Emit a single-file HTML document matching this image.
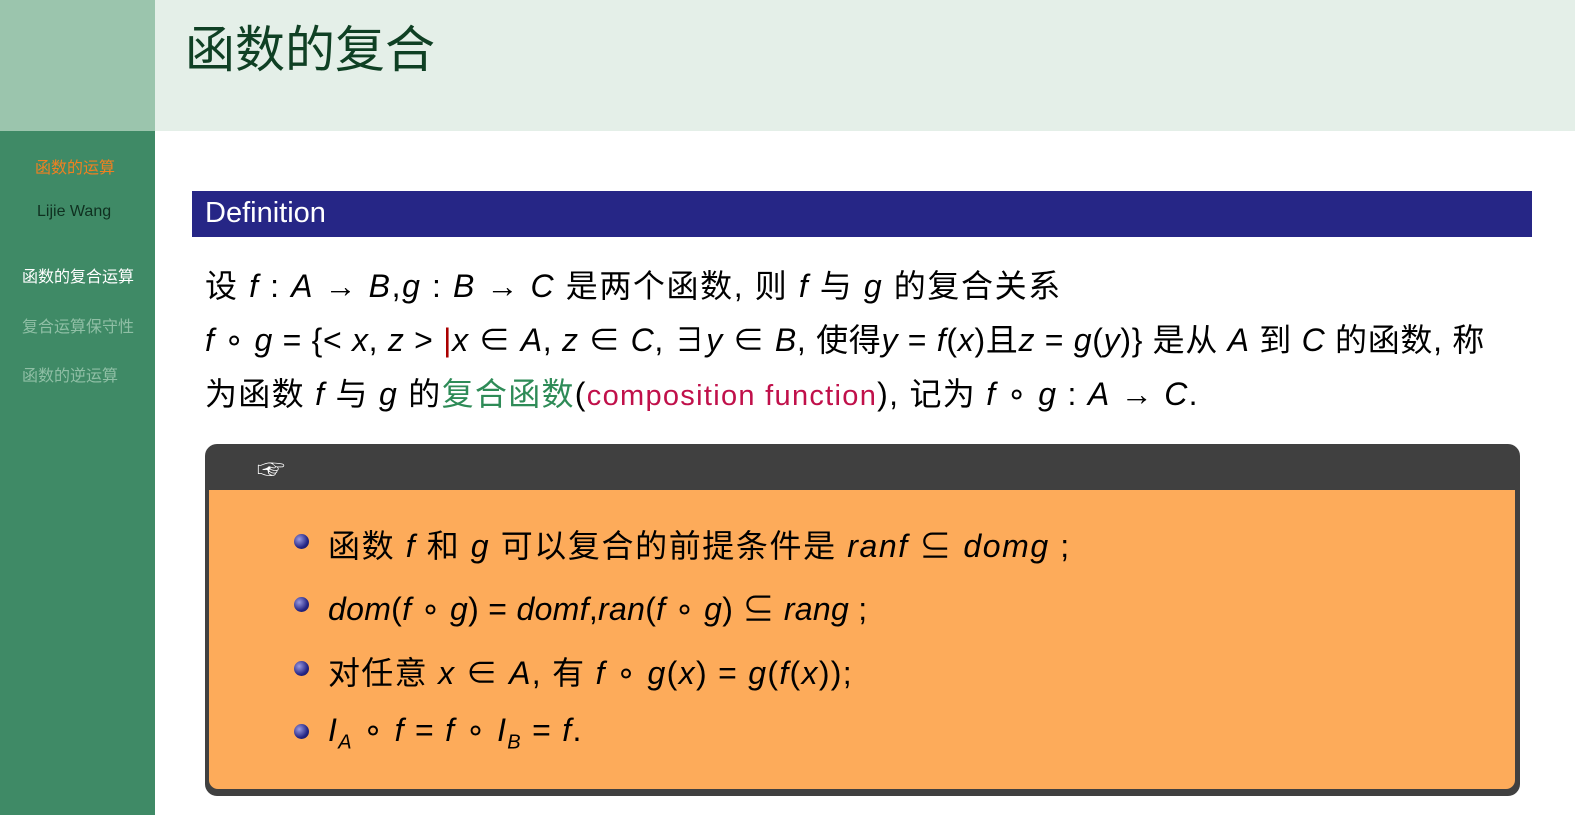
<!DOCTYPE html>
<html><head><meta charset="utf-8"><style>
body{margin:0;width:1575px;height:815px;position:relative;overflow:hidden;background:#fff;font-family:"Liberation Sans","Noto Sans CJK SC",sans-serif;}
.a{position:absolute;white-space:nowrap}
i{font-style:italic}
.t{font-size:32px;letter-spacing:1.3px;color:#000}
.b{position:absolute;left:-34px;top:13px;width:15px;height:15px;border-radius:50%;background:radial-gradient(circle at 35% 35%,#9a9ae0,#262686 60%,#101050)}
</style></head><body>
<div class="a" style="left:0;top:0;width:155px;height:131px;background:#9bc5ad"></div>
<div class="a" style="left:155px;top:0;width:1420px;height:131px;background:#e4efe8"></div>
<div class="a" style="left:0;top:131px;width:155px;height:684px;background:#3f8a66"></div>
<div class="a" style="left:185px;top:10px;font-size:50px;color:#0f4024">函数的复合</div>
<div class="a" style="left:35px;top:154px;font-size:16px;color:#f08020">函数的运算</div>
<div class="a" style="left:37px;top:203px;font-size:16px;color:#0f3020">Lijie Wang</div>
<div class="a" style="left:22px;top:263px;font-size:16px;color:#fff">函数的复合运算</div>
<div class="a" style="left:22px;top:313px;font-size:16px;color:#8fbfa5">复合运算保守性</div>
<div class="a" style="left:22px;top:362px;font-size:16px;color:#8fbfa5">函数的逆运算</div>
<div class="a" style="left:192px;top:191px;width:1340px;height:46px;background:#262686"></div>
<div class="a" style="left:205px;top:197px;font-size:29px;color:#fff">Definition</div>
<div class="a t" style="left:205px;top:261px;letter-spacing:1.6px">设 <i>f</i> : <i>A</i> → <i>B</i>,<i>g</i> : <i>B</i> → <i>C</i> 是两个函数, 则 <i>f</i> 与 <i>g</i> 的复合关系</div>
<div class="a t" style="left:205px;top:315px;letter-spacing:0.7px"><i>f</i> ∘ <i>g</i> = {&lt; <i>x</i>, <i>z</i> &gt; <span style="color:#a00">|</span><i>x</i> ∈ <i>A</i>, <i>z</i> ∈ <i>C</i>, ∃<i>y</i> ∈ <i>B</i>, 使得<i>y</i> = <i>f</i>(<i>x</i>)且<i>z</i> = <i>g</i>(<i>y</i>)} 是从 <i>A</i> 到 <i>C</i> 的函数, 称</div>
<div class="a t" style="left:205px;top:369px">为函数 <i>f</i> 与 <i>g</i> 的<span style="color:#2e8b57">复合函数</span>(<span style="color:#c0104a;font-size:29px">composition function</span>), 记为 <i>f</i> ∘ <i>g</i> : <i>A</i> → <i>C</i>.</div>
<div class="a" style="left:205px;top:444px;width:1307px;height:344px;background:#404040;border:4px solid #404040;border-radius:12px"></div>
<div class="a" style="left:209px;top:490px;width:1306px;height:299px;background:#fdab5a;border-radius:0 0 9px 9px"></div>
<div class="a" style="left:257px;top:448px;font-size:28px;color:#fff">☞</div>
<div class="a t" style="left:328px;top:521px;letter-spacing:1.6px"><span class="b"></span>函数 <i>f</i> 和 <i>g</i> 可以复合的前提条件是 <i>ranf</i> ⊆ <i>domg</i> ;</div>
<div class="a t" style="left:328px;top:584px;letter-spacing:0.3px"><span class="b"></span><i>dom</i>(<i>f</i> ∘ <i>g</i>) = <i>domf</i>,<i>ran</i>(<i>f</i> ∘ <i>g</i>) ⊆ <i>rang</i> ;</div>
<div class="a t" style="left:328px;top:648px"><span class="b"></span>对任意 <i>x</i> ∈ <i>A</i>, 有 <i>f</i> ∘ <i>g</i>(<i>x</i>) = <i>g</i>(<i>f</i>(<i>x</i>));</div>
<div class="a t" style="left:328px;top:711px"><span class="b"></span><i>I<sub style="font-size:20px">A</sub></i> ∘ <i>f</i> = <i>f</i> ∘ <i>I<sub style="font-size:20px">B</sub></i> = <i>f</i>.</div>
</body></html>
